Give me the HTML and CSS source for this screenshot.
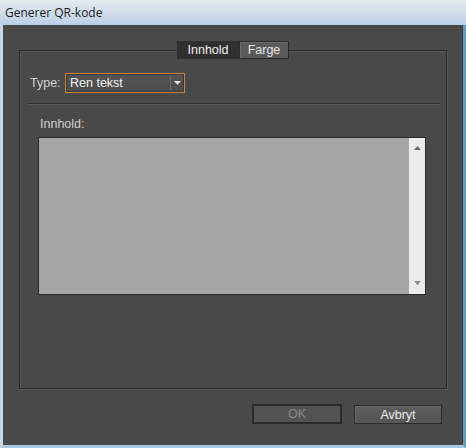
FILE: index.html
```html
<!DOCTYPE html>
<html>
<head>
<meta charset="utf-8">
<link rel="stylesheet" href="styles.css">
</head>
<body>
<div class="window">
  <div class="titlebar">Generer QR-kode</div>
  <div class="client">
    <div class="group">
      <div class="tabs">
        <div class="tab active">Innhold</div>
        <div class="tab">Farge</div>
      </div>
      <div class="type-row">
        <span class="label">Type:</span>
        <div class="select">
          <span class="select-text">Ren tekst</span>
          <span class="select-arrow"><svg width="7" height="4" viewBox="0 0 7 4"><path d="M0 0H7L3.5 4Z" fill="#e8e8e8"/></svg></span>
        </div>
      </div>
      <div class="separator"></div>
      <div class="content-label">Innhold:</div>
      <div class="textarea">
        <div class="text-fill"></div>
        <div class="scrollbar">
          <svg width="7" height="4" viewBox="0 0 7 4"><path d="M0 4H7L3.5 0Z" fill="#6a6a6a"/></svg>
          <svg width="7" height="4" viewBox="0 0 7 4"><path d="M0 0H7L3.5 4Z" fill="#8a8a8a"/></svg>
        </div>
      </div>
    </div>
    <div class="buttons">
      <div class="button disabled">OK</div>
      <div class="button">Avbryt</div>
    </div>
  </div>
</div>
</body>
</html>
```
FILE: styles.css
```css
html, body {
  margin: 0;
  padding: 0;
  width: 466px;
  height: 448px;
  overflow: hidden;
  background: #4a4a4a;
}
.window {
  width: 466px;
  height: 448px;
  box-sizing: border-box;
  display: flex;
  flex-direction: column;
  background: linear-gradient(#d6e2ee, #b9cde3);
  border-left: 3px solid #c4d6ea;
  border-right: 3px solid #5f9ec4;
  border-bottom: 3px solid #a9c8e2;
  font-family: "Liberation Sans", Arial, sans-serif;
  font-size: 12px;
}
.titlebar {
  height: 25px;
  display: flex;
  align-items: center;
  padding-left: 5px;
  margin-left: -3px;
  color: #1a1a1a;
  font-family: "Open Sans", "Liberation Sans", sans-serif;
  font-size: 12px;
  background: linear-gradient(#e4ebf3, #bcd0e6);
  margin-right: -3px;
}
.client {
  flex: 1;
  background: #494949;
  display: flex;
  flex-direction: column;
  border-right: 1px solid #3a3a3a;
}
.group {
  margin-left: 16px;
  margin-top: 25px;
  width: 428px;
  height: 339px;
  box-sizing: border-box;
  border: 1px solid #2c2c2c;
  box-shadow: 1px 1px 0 #575757, inset 1px 1px 0 #575757;
  display: flex;
  flex-direction: column;
}
.tabs {
  display: flex;
  align-self: center;
  margin-top: -10px;
  height: 18px;
}
.tab {
  height: 18px;
  box-sizing: border-box;
  padding: 0 10px;
  display: flex;
  align-items: center;
  color: #e6e6e6;
  font-size: 12.5px;
  background: #5a5a5a;
  border: 1px solid #2a2a2a;
  box-shadow: inset 1px 1px 0 #6c6c6c;
  width: 50px;
  justify-content: center;
}
.tab.active {
  width: 62px;
  background: #2f2f2f;
  box-shadow: none;
  border-color: #2f2f2f;
  color: #f0f0f0;
}
.type-row {
  display: flex;
  align-items: center;
  margin-top: 14px;
  padding-left: 10px;
  height: 20px;
}
.label {
  color: #d2d2d2;
  font-size: 12.5px;
  width: 35px;
}
.select {
  width: 120px;
  height: 20px;
  box-sizing: border-box;
  border: 1px solid #c8883c;
  background: linear-gradient(#545454, #4c4c4c);
  box-shadow: inset 0 0 0 1px #3a3a3a;
  display: flex;
  align-items: center;
}
.select-text {
  flex: 1;
  color: #f2f2f2;
  padding-left: 4px;
  font-size: 12.5px;
}
.select-arrow {
  width: 12px;
  height: 14px;
  border-left: 1px solid #6a6a6a;
  display: flex;
  align-items: center;
  justify-content: center;
  margin-right: 1px;
}
.separator {
  margin: 10px 6px 0 8px;
  height: 1px;
  background: #2f2f2f;
  box-shadow: 0 1px 0 #5a5a5a;
}
.content-label {
  color: #cfcfcf;
  font-size: 12.5px;
  margin: 13px 0 0 20px;
  height: 20px;
  line-height: 14px;
}
.textarea {
  margin-left: 18px;
  width: 388px;
  height: 158px;
  box-sizing: border-box;
  border: 1px solid #2a2a2a;
  display: flex;
}
.text-fill {
  flex: 1;
  background: #a5a5a5;
}
.scrollbar {
  width: 16px;
  background: #ececec;
  display: flex;
  flex-direction: column;
  justify-content: space-between;
  align-items: center;
  padding: 8px 0 9px;
}
.buttons {
  display: flex;
  justify-content: flex-end;
  gap: 12px;
  margin-top: 16px;
  padding-right: 20px;
}
.button {
  width: 88px;
  height: 19px;
  box-sizing: border-box;
  border: 1px solid #2c2c2c;
  background: linear-gradient(#5e5e5e, #555555);
  box-shadow: inset 1px 1px 0 #6a6a6a;
  color: #ececec;
  display: flex;
  align-items: center;
  justify-content: center;
  font-size: 12.5px;
}
.button.disabled {
  width: 90px;
  height: 20px;
  margin-top: -1px;
  border: 2px solid #2a2a2a;
  color: #8a8a8a;
  background: #525252;
  box-shadow: none;
}
```
